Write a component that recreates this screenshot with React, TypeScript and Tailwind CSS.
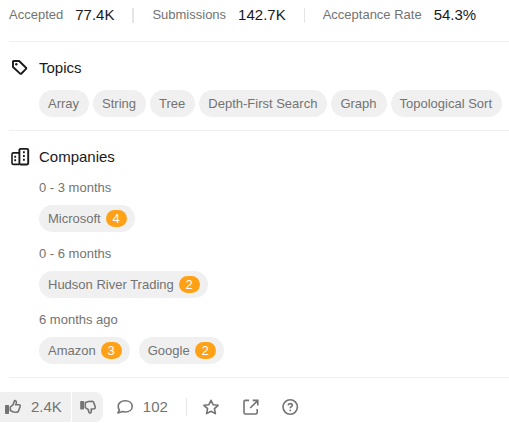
import type { ReactNode } from 'react';

type Company = { name: string; count: number };
type Period = { label: string; companies: Company[] };

const stats = [
  { label: 'Accepted', value: '77.4K', divider: '' },
  { label: 'Submissions', value: '142.7K', divider: 'w-0.5' },
  { label: 'Acceptance Rate', value: '54.3%', divider: 'w-px' },
];

const topics = ['Array', 'String', 'Tree', 'Depth-First Search', 'Graph', 'Topological Sort'];

const periods: Period[] = [
  { label: '0 - 3 months', companies: [{ name: 'Microsoft', count: 4 }] },
  { label: '0 - 6 months', companies: [{ name: 'Hudson River Trading', count: 2 }] },
  {
    label: '6 months ago',
    companies: [
      { name: 'Amazon', count: 3 },
      { name: 'Google', count: 2 },
    ],
  },
];

function TagIcon() {
  return (
    <svg width="18" height="18" viewBox="0 0 18 18" fill="none" stroke="currentColor" strokeWidth="1.9" strokeLinejoin="round" aria-hidden="true">
      <path d="M3 2.6Q3 2 3.6 2H9.1L16 8.7Q16.6 9.3 16 9.9L11.5 14.5Q10.8 15.2 10.1 14.6L3 8Z" />
      <circle cx="6.3" cy="5.2" r="1.2" fill="currentColor" stroke="none" />
    </svg>
  );
}

function BuildingsIcon() {
  return (
    <svg width="20" height="20" viewBox="0 0 20 20" fill="none" stroke="currentColor" strokeLinejoin="round" aria-hidden="true">
      <path d="M9 17.4H3.4Q2 17.4 2 16V7.3Q2 5.9 3.4 5.9H9" strokeWidth="1.6" />
      <rect x="9.4" y="1.9" width="8.8" height="15.6" rx="1.2" strokeWidth="1.9" />
      <path d="M4.3 9.8H6.1M4.3 13.3H6.1M13 5.2H14.8M13 9H14.8M13 12.7H14.8" strokeWidth="2" />
    </svg>
  );
}

function ThumbUpIcon() {
  return (
    <svg width="18" height="18" viewBox="0 0 18 18" fill="none" stroke="currentColor" strokeWidth="1.6" strokeLinejoin="round" aria-hidden="true">
      <rect x="1" y="7" width="4" height="9" rx="0.7" fill="currentColor" stroke="none" />
      <path d="M6.3 9L9.2 6.6L10.2 3.2Q10.7 2 11.7 2.8Q12.8 3.8 12.3 5.2L11.6 6.8H14.9Q16.6 7 16.1 8.5L14.5 12.9Q13.9 14.4 12.5 14.3L9.4 14L6.3 12.6Z" />
    </svg>
  );
}

function ThumbDownIcon() {
  return (
    <svg width="18" height="18" viewBox="0 0 18 18" fill="none" stroke="currentColor" strokeWidth="1.6" strokeLinejoin="round" aria-hidden="true">
      <rect x="1.2" y="3" width="3.8" height="8.4" rx="0.7" fill="currentColor" stroke="none" />
      <path d="M6.3 4.6L9.6 3.5L13 3.3Q14.3 3.4 14.7 4.6L16.2 8.8Q16.6 10.4 15.1 10.7L12.2 11.1L12.3 13.4Q12.1 15.3 10.8 15Q10 14.8 9.8 13.8L9.2 11.5L6.3 9.6Z" />
    </svg>
  );
}

function CommentIcon() {
  return (
    <svg width="18" height="18" viewBox="0 0 18 18" fill="none" stroke="currentColor" strokeWidth="1.6" strokeLinejoin="round" aria-hidden="true">
      <path d="M9.2 2.8C13.3 2.8 16.2 5.2 16.2 8.4S13.3 14 9.2 14Q7.8 14 6.5 13.6L1.9 14.9L3.4 12Q2.2 10.3 2.2 8.4C2.2 5.2 5.1 2.8 9.2 2.8Z" />
    </svg>
  );
}

function StarIcon() {
  return (
    <svg width="18" height="18" viewBox="0 0 18 18" fill="none" stroke="currentColor" strokeWidth="1.6" strokeLinejoin="round" aria-hidden="true">
      <path d="M9 2.3L11.1 6.7L16.1 7.3L12.4 10.7L13.4 15.6L9 13.2L4.6 15.6L5.6 10.7L1.9 7.3L6.9 6.7Z" />
    </svg>
  );
}

function ShareIcon() {
  return (
    <svg width="18" height="18" viewBox="0 0 18 18" fill="none" stroke="currentColor" strokeWidth="1.6" aria-hidden="true">
      <path d="M7 2.4H3.4Q2 2.4 2 3.8V14.6Q2 16 3.4 16H13.8Q15.2 16 15.2 14.6V11M10.7 2.4H15.8V7.5M15.6 2.6L8.2 10" />
    </svg>
  );
}

function HelpIcon() {
  return (
    <svg width="18" height="18" viewBox="0 0 18 18" fill="none" stroke="currentColor" strokeWidth="1.6" aria-hidden="true">
      <circle cx="8.2" cy="9" r="7.2" />
      <path d="M6.1 7.4Q6.3 5.6 8.2 5.6T10.3 7.2Q10.3 8.2 9.2 8.8Q8.2 9.3 8.2 10.3" />
      <circle cx="8.2" cy="12.4" r="0.9" fill="currentColor" stroke="none" />
    </svg>
  );
}

function Pill({ name, count }: { name: string; count?: number }) {
  const hasCount = count !== undefined;
  return (
    <a
      href="#"
      className={`flex h-[27px] items-center gap-[5px] rounded-full bg-[#f0f0f0] pl-[9px] whitespace-nowrap ${hasCount ? 'pr-2' : 'pr-[10px]'}`}
    >
      {name}
      {hasCount && (
        <span className="flex h-[17px] w-[21px] items-center justify-center rounded-full bg-[#ffa116] text-white">
          {count}
        </span>
      )}
    </a>
  );
}

function Heading({ icon, children }: { icon: ReactNode; children: ReactNode }) {
  return (
    <h2 className="flex h-5 items-center text-[15px] text-[#1a1a1a]">
      <span className="flex w-[30px] shrink-0 justify-start pl-px">{icon}</span>
      {children}
    </h2>
  );
}

export default function App() {
  return (
    <main className="bg-white font-['Liberation_Sans',Arial,sans-serif] text-[13px] leading-5 text-[#737373]">
      <div className="pl-[9px]">
        <dl className="flex h-[41px] items-start pt-[5px]">
          {stats.map((stat) => (
            <div key={stat.label} className="flex items-center whitespace-nowrap">
              {stat.divider && <span className={`mr-[18px] ml-[18px] h-[15px] bg-[#e5e5e5] ${stat.divider}`} />}
              <dt className="mr-3">{stat.label}</dt>
              <dd className="text-[15px] text-[#1a1a1a]">{stat.value}</dd>
            </div>
          ))}
        </dl>

        <section className="border-t border-[#f0f0f0] pt-4 pb-[13px]">
          <Heading icon={<TagIcon />}>Topics</Heading>
          <div className="mt-3 ml-[30px] flex flex-wrap gap-1">
            {topics.map((topic) => (
              <Pill key={topic} name={topic} />
            ))}
          </div>
        </section>

        <section className="border-y border-[#f0f0f0] pt-4 pb-[13px]">
          <Heading icon={<BuildingsIcon />}>Companies</Heading>
          <div className="mt-[11px] ml-[30px] flex flex-col gap-3">
            {periods.map((period) => (
              <div key={period.label}>
                <h3>{period.label}</h3>
                <div className="mt-[7px] flex flex-wrap gap-[9px]">
                  {period.companies.map((company) => (
                    <Pill key={company.name} name={company.name} count={company.count} />
                  ))}
                </div>
              </div>
            ))}
          </div>
        </section>
      </div>

      <footer className="flex items-center pt-[14px] text-[15px]">
        <div className="flex h-[30px] gap-px overflow-hidden rounded-r-lg">
          <button type="button" aria-label="Like, 2.4K" className="flex items-center gap-[9px] bg-[#f0f0f0] pr-[9px] pl-1">
            <ThumbUpIcon />
            2.4K
          </button>
          <button type="button" aria-label="Dislike" className="flex items-center bg-[#f0f0f0] pr-1.5 pl-[7px]">
            <ThumbDownIcon />
          </button>
        </div>
        <button type="button" aria-label="Comments, 102" className="ml-[13px] flex items-center gap-[9px]">
          <CommentIcon />
          102
        </button>
        <span className="mr-[15px] ml-[18px] h-[18px] w-px bg-[#e5e5e5]" />
        <div className="flex gap-[22px]">
          <button type="button" aria-label="Favorite"><StarIcon /></button>
          <button type="button" aria-label="Share"><ShareIcon /></button>
          <button type="button" aria-label="Help"><HelpIcon /></button>
        </div>
      </footer>
    </main>
  );
}
